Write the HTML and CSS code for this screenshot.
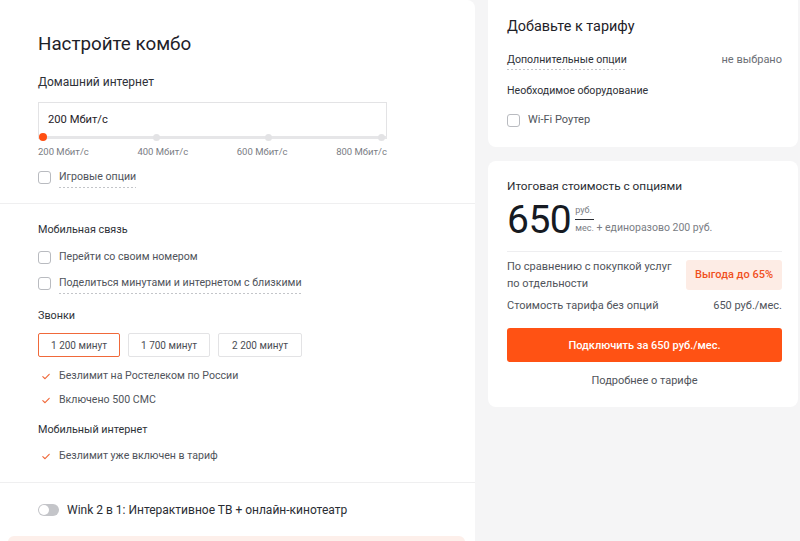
FILE: index.html
```html
<!DOCTYPE html>
<html lang="ru">
<head>
<meta charset="utf-8">
<link rel="stylesheet" href="styles.css">
</head>
<body>
<div class="page">
  <main class="combo">
    <section class="sec sec-inet">
      <h1 class="title">Настройте комбо</h1>
      <div class="label label-home">Домашний интернет</div>
      <div class="speed-box">200 Мбит/с</div>
      <div class="slider">
        <span class="dot active"></span><span class="dot"></span><span class="dot"></span><span class="dot"></span>
      </div>
      <div class="ticks"><span>200 Мбит/с</span><span>400 Мбит/с</span><span>600 Мбит/с</span><span>800 Мбит/с</span></div>
      <label class="cb cb-first"><span class="box"></span><span class="dashed">Игровые опции</span></label>
    </section>
    <section class="sec sec-mob">
      <div class="label">Мобильная связь</div>
      <label class="cb cb-m1"><span class="box"></span><span>Перейти со своим номером</span></label>
      <label class="cb cb-m2"><span class="box"></span><span class="dashed">Поделиться минутами и интернетом с близкими</span></label>
      <div class="label label-calls">Звонки</div>
      <div class="opts">
        <button class="opt selected">1 200 минут</button>
        <button class="opt">1 700 минут</button>
        <button class="opt">2 200 минут</button>
      </div>
      <ul class="checks checks-calls">
        <li><svg viewBox="0 0 10 8" class="tick"><path d="M1 4.2 L3.8 6.8 L9 1.2" fill="none" stroke="#f0693a" stroke-width="1.4" stroke-linecap="round" stroke-linejoin="round"/></svg>Безлимит на Ростелеком по России</li>
        <li><svg viewBox="0 0 10 8" class="tick"><path d="M1 4.2 L3.8 6.8 L9 1.2" fill="none" stroke="#f0693a" stroke-width="1.4" stroke-linecap="round" stroke-linejoin="round"/></svg>Включено 500 СМС</li>
      </ul>
      <div class="label label-mi">Мобильный интернет</div>
      <ul class="checks checks-mi">
        <li><svg viewBox="0 0 10 8" class="tick"><path d="M1 4.2 L3.8 6.8 L9 1.2" fill="none" stroke="#f0693a" stroke-width="1.4" stroke-linecap="round" stroke-linejoin="round"/></svg>Безлимит уже включен в тариф</li>
      </ul>
    </section>
    <section class="sec sec-tv">
      <div class="toggle-row"><span class="toggle"><span class="knob"></span></span><span>Wink 2 в 1: Интерактивное ТВ + онлайн-кинотеатр</span></div>
    </section>
    <div class="promo"></div>
  </main>
  <aside class="side">
    <div class="card card-add">
      <h2 class="card-title">Добавьте к тарифу</h2>
      <div class="row row-opts"><span class="dashed">Дополнительные опции</span><span class="muted">не выбрано</span></div>
      <div class="row row-eq"><span>Необходимое оборудование</span></div>
      <label class="cb cb-wifi"><span class="box"></span><span>Wi-Fi Роутер</span></label>
    </div>
    <div class="card card-total">
      <div class="total-title">Итоговая стоимость с опциями</div>
      <div class="price">
        <span class="price-num">650</span>
        <span class="price-unit"><span class="unit-top">руб.</span><span class="unit-bot"><span class="unit-mes">мес.</span> + единоразово 200 руб.</span></span>
      </div>
      <div class="compare">
        <div class="compare-text">По сравнению с покупкой услуг<br>по отдельности</div>
        <div class="badge">Выгода до 65%</div>
      </div>
      <div class="row row-base"><span>Стоимость тарифа без опций</span><span>650 руб./мес.</span></div>
      <button class="cta">Подключить за 650 руб./мес.</button>
      <div class="more">Подробнее о тарифе</div>
    </div>
  </aside>
</div>
</body>
</html>
```
FILE: styles.css
```css
* { box-sizing: border-box; }
html, body { margin: 0; padding: 0; }
body {
  background: #f5f5f6;
  font-family: Roboto, "Liberation Sans", Arial, sans-serif;
  color: #262a31;
  width: 800px;
  height: 541px;
  overflow: hidden;
}
.page {
  display: flex;
  align-items: flex-start;
  gap: 13px;
}
.combo {
  width: 475px;
  flex: none;
  background: #fff;
  border-radius: 0 8px 0 0;
  min-height: 560px;
}
.sec { padding: 0 38px; border-bottom: 1px solid #efeff0; }
.sec-inet { padding-top: 32px; padding-bottom: 18px; }
.title {
  margin: 0;
  font-size: 18.8px;
  line-height: 24px;
  font-weight: 400;
  color: #1e2128;
}
.label { font-size: 10.8px; line-height: 16px; color: #2e3138; }
.label-home { font-size: 12px; margin-top: 18px; }
.speed-box {
  margin-top: 12px;
  width: 349px;
  height: 35px;
  border: 1px solid #e3e3e5;
  border-bottom: none;
  font-size: 11.2px;
  line-height: 34px;
  padding-left: 9px;
  color: #1f2228;
}
.slider {
  margin-top: -4px;
  width: 349px;
  height: 8px;
  padding: 0 2px 0 1px;
  display: flex;
  justify-content: space-between;
  align-items: center;
  background: linear-gradient(#e6e6e8, #e6e6e8) center / 100% 3px no-repeat;
}
.dot { width: 7px; height: 7px; border-radius: 50%; background: #e3e3e5; }
.dot.active { width: 8px; height: 8px; background: #ff4f12; }
.ticks {
  margin-top: 5px;
  width: 349px;
  display: flex;
  justify-content: space-between;
  font-size: 9.5px;
  line-height: 12px;
  color: #7a7d84;
}
.cb {
  display: flex;
  align-items: center;
  gap: 8px;
  font-size: 10.6px;
  line-height: 16px;
  color: #50545b;
}
.box {
  width: 13px;
  height: 13px;
  border: 1px solid #b9bbc0;
  border-radius: 3px;
  flex: none;
}
.dashed {
  background-image: linear-gradient(to right, #c3c5c9 50%, transparent 50%);
  background-size: 4px 1px;
  background-repeat: repeat-x;
  background-position: 0 100%;
  padding-bottom: 3px;
  margin-bottom: -3px;
}
.cb-first { margin-top: 11px; }
.sec-mob { padding-top: 18px; padding-bottom: 18px; }
.cb-m1 { margin-top: 11px; }
.cb-m2 { margin-top: 10px; }
.label-calls { margin-top: 17px; }
.opts { display: flex; gap: 8px; margin-top: 9px; }
.opt {
  height: 24px;
  width: 82px;
  border: 1px solid #e3e3e5;
  border-radius: 2px;
  background: #fff;
  font-family: inherit;
  font-size: 10px;
  color: #4a4d54;
  padding: 0;
}
.opt:last-child { width: 84px; }
.opt.selected { border-color: #f0693a; }
.checks { list-style: none; margin: 11px 0 0; padding: 0; }
.checks li {
  display: flex;
  align-items: center;
  gap: 9px;
  font-size: 10.6px;
  line-height: 16px;
  color: #50545b;
  padding-left: 4px;
}
.checks li + li { margin-top: 8px; }
.tick { width: 8px; height: 7px; flex: none; }
.label-mi { margin-top: 14px; }
.checks-mi { margin-top: 10px; }
.sec-tv { padding-top: 19px; padding-bottom: 0; border-bottom: none; }
.toggle-row {
  display: flex;
  align-items: center;
  gap: 8px;
  font-size: 12px;
  line-height: 16px;
  color: #2a2d33;
}
.toggle {
  width: 21px;
  height: 12px;
  border-radius: 6px;
  background: #c4c5c9;
  padding: 1px;
  display: flex;
}
.knob { width: 10px; height: 10px; border-radius: 50%; background: #fff; }
.promo {
  margin: 18px 10px 0 8px;
  height: 40px;
  border-radius: 6px;
  background: #fdefea;
}
.side {
  width: 310px;
  flex: none;
  display: flex;
  flex-direction: column;
  gap: 14px;
}
.card {
  background: #fff;
  border-radius: 8px;
  padding: 0 16px 0 19px;
}
.card-add { padding-top: 17px; height: 147px; border-radius: 0 0 8px 8px; }
.card-title {
  margin: 0;
  font-size: 14.4px;
  line-height: 20px;
  font-weight: 400;
  color: #1e2128;
}
.row {
  display: flex;
  justify-content: space-between;
  font-size: 10.6px;
  line-height: 14px;
  color: #2e3138;
}
.row-opts { margin-top: 16px; }
.muted { color: #6b6e75; font-size: 11px; }
.row-eq { margin-top: 17px; }
.cb-wifi { margin-top: 14px; font-size: 11px; }
.card-total { padding-top: 17px; padding-bottom: 19px; }
.total-title { font-size: 11.8px; line-height: 16px; color: #2a2d33; }
.price {
  margin-top: 8px;
  display: flex;
  align-items: flex-start;
  gap: 4px;
  padding-bottom: 13px;
  border-bottom: 1px solid #eeeef0;
}
.price-num {
  font-size: 39px;
  line-height: 36px;
  color: #161a22;
  letter-spacing: -0.5px;
}
.price-unit {
  display: flex;
  flex-direction: column;
  font-size: 9px;
  color: #7a7d84;
  margin-top: 3px;
}
.unit-top { line-height: 11px; }
.unit-bot { line-height: 13px; font-size: 10.5px; margin-top: 3px; }
.unit-mes {
  display: inline-block;
  border-top: 1px solid #2a2d33;
  padding-top: 2px;
  font-size: 9px;
}
.compare {
  margin-top: 6px;
  display: flex;
  justify-content: space-between;
  align-items: center;
}
.compare-text { font-size: 11px; line-height: 17px; color: #50545b; }
.badge {
  background: #fdece5;
  color: #f0501e;
  font-size: 11px;
  font-weight: 500;
  border-radius: 3px;
  padding: 0 9px;
  height: 30px;
  line-height: 30px;
  white-space: nowrap;
}
.row-base { margin-top: 7px; color: #50545b; font-size: 11px; }
.cta {
  margin-top: 15px;
  width: 100%;
  height: 34px;
  border: none;
  border-radius: 3px;
  background: #ff5214;
  color: #fff;
  font-family: inherit;
  font-size: 11px;
  font-weight: 500;
}
.more {
  margin-top: 12px;
  text-align: center;
  font-size: 11px;
  line-height: 14px;
  color: #50545b;
}
```
